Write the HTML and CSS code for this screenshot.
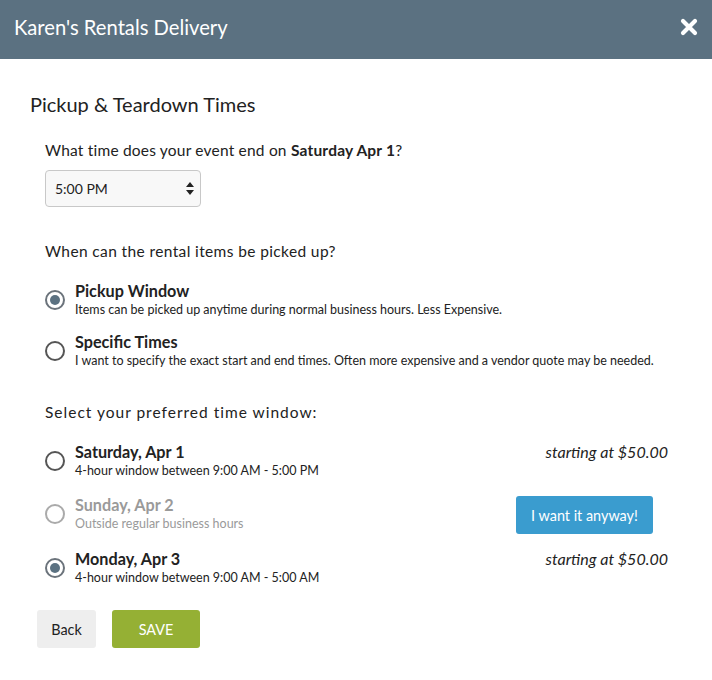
FILE: index.html
```html
<!DOCTYPE html>
<html>
<head>
<meta charset="utf-8">
<link rel="stylesheet" href="styles.css">
</head>
<body>
<div class="modal">
  <header class="header">
    <h1 class="title">Karen's Rentals Delivery</h1>
    <svg class="close" width="18" height="18" viewBox="0 0 18 18"><path d="M3 3 L15 15 M15 3 L3 15" stroke="#fff" stroke-width="4.2" stroke-linecap="round"/></svg>
  </header>
  <main class="body">
    <h2 class="section-title">Pickup &amp; Teardown Times</h2>
    <div class="indent">
      <p class="question q1">What time does your event end on <b>Saturday Apr 1</b>?</p>
      <div class="select">
        <span>5:00 PM</span>
        <svg width="8" height="13" viewBox="0 0 8 13"><path d="M4 0 L8 5 H0 Z M0 8 H8 L4 13 Z" fill="#222"/></svg>
      </div>
      <p class="question q2">When can the rental items be picked up?</p>
      <div class="option o1">
        <span class="radio checked"></span>
        <div class="opt-text">
          <div class="opt-title">Pickup Window</div>
          <div class="opt-sub">Items can be picked up anytime during normal business hours. Less Expensive.</div>
        </div>
      </div>
      <div class="option o2">
        <span class="radio"></span>
        <div class="opt-text">
          <div class="opt-title">Specific Times</div>
          <div class="opt-sub">I want to specify the exact start and end times. Often more expensive and a vendor quote may be needed.</div>
        </div>
      </div>
      <p class="question q3">Select your preferred time window:</p>
      <div class="option d1">
        <span class="radio"></span>
        <div class="opt-text">
          <div class="opt-title">Saturday, Apr 1</div>
          <div class="opt-sub">4-hour window between 9:00 AM - 5:00 PM</div>
        </div>
        <div class="price">starting at $50.00</div>
      </div>
      <div class="option d2 disabled">
        <span class="radio"></span>
        <div class="opt-text">
          <div class="opt-title">Sunday, Apr 2</div>
          <div class="opt-sub">Outside regular business hours</div>
        </div>
        <button class="btn-anyway">I want it anyway!</button>
      </div>
      <div class="option d3">
        <span class="radio checked"></span>
        <div class="opt-text">
          <div class="opt-title">Monday, Apr 3</div>
          <div class="opt-sub">4-hour window between 9:00 AM - 5:00 AM</div>
        </div>
        <div class="price">starting at $50.00</div>
      </div>
    </div>
    <div class="actions">
      <button class="btn-back">Back</button>
      <button class="btn-save">SAVE</button>
    </div>
  </main>
</div>
</body>
</html>
```
FILE: styles.css
```css
* { box-sizing: border-box; }
html, body { margin: 0; padding: 0; background: #fff; }
body { font-family: Lato, "Open Sans", sans-serif; color: #222; }
.modal { width: 712px; height: 680px; }
.header {
  height: 59px;
  background: #5b7181;
  display: flex;
  align-items: center;
  justify-content: space-between;
  padding: 0 14px 5px 14px;
}
.title { margin: 0; font-size: 20.2px; font-weight: 400; color: #fff; line-height: 24px; }
.close { display: block; }
.body { padding: 33px 44px 0 30px; }
.section-title { margin: 0; font-size: 20px; font-weight: 400; line-height: 24px; color: #222; }
.indent { padding-left: 15px; }
.question { margin: 0; font-size: 15.5px; line-height: 20px; }
.q1 { margin-top: 24px; letter-spacing: 0.2px; }
.q1 b { font-weight: 700; }
.select {
  margin-top: 10px;
  width: 156px;
  height: 37px;
  border: 1px solid #c8c8c8;
  border-radius: 4px;
  background: #f8f8f8;
  display: flex;
  align-items: center;
  justify-content: space-between;
  padding: 0 6px 0 9px;
  font-size: 14px;
}
.q2 { margin-top: 34px; letter-spacing: 0.38px; }
.q3 { margin-top: 33px; letter-spacing: 1px; }
.option { display: flex; align-items: flex-start; }
.o1 { margin-top: 20px; }
.o2 { margin-top: 14px; }
.d1 { margin-top: 20px; }
.d2 { margin-top: 16px; }
.d3 { margin-top: 15px; }
.radio {
  width: 20px; height: 20px;
  border: 2px solid #555;
  border-radius: 50%;
  margin-top: 9px;
  margin-right: 10px;
  flex: none;
  position: relative;
  background: #fff;
}
.radio.checked { border: 2px solid #6b737b; }
.radio.checked::after {
  content: "";
  position: absolute;
  left: 3px; top: 3px;
  width: 10px; height: 10px;
  border-radius: 50%;
  background: #5b7181;
}
.opt-text { flex: 1; }
.opt-title { font-size: 16.2px; font-weight: 700; line-height: 20px; }
.opt-sub { font-size: 12.5px; line-height: 16px; margin-top: 1px; color: #222; }
.price { font-size: 16px; font-style: italic; line-height: 20px; }
.disabled .opt-title, .disabled .opt-sub { color: #9a9a9a; }
.disabled .radio { border-color: #aaa; }
.btn-anyway {
  margin-top: 1px;
  margin-right: 15px;
  width: 137px;
  height: 38px;
  border: none;
  border-radius: 3px;
  background: #3a9ccf;
  color: #fff;
  font-family: Lato, sans-serif;
  font-size: 14.4px;
}
.actions { display: flex; gap: 16px; margin-top: 24px; padding-left: 7px; }
.actions button {
  height: 38px;
  border: none;
  border-radius: 3px;
  font-family: Lato, sans-serif;
  font-size: 14.4px;
}
.btn-back { width: 59px; background: #eeeeee; color: #222; }
.btn-save { width: 88px; background: #95b034; color: #fff; }
```
